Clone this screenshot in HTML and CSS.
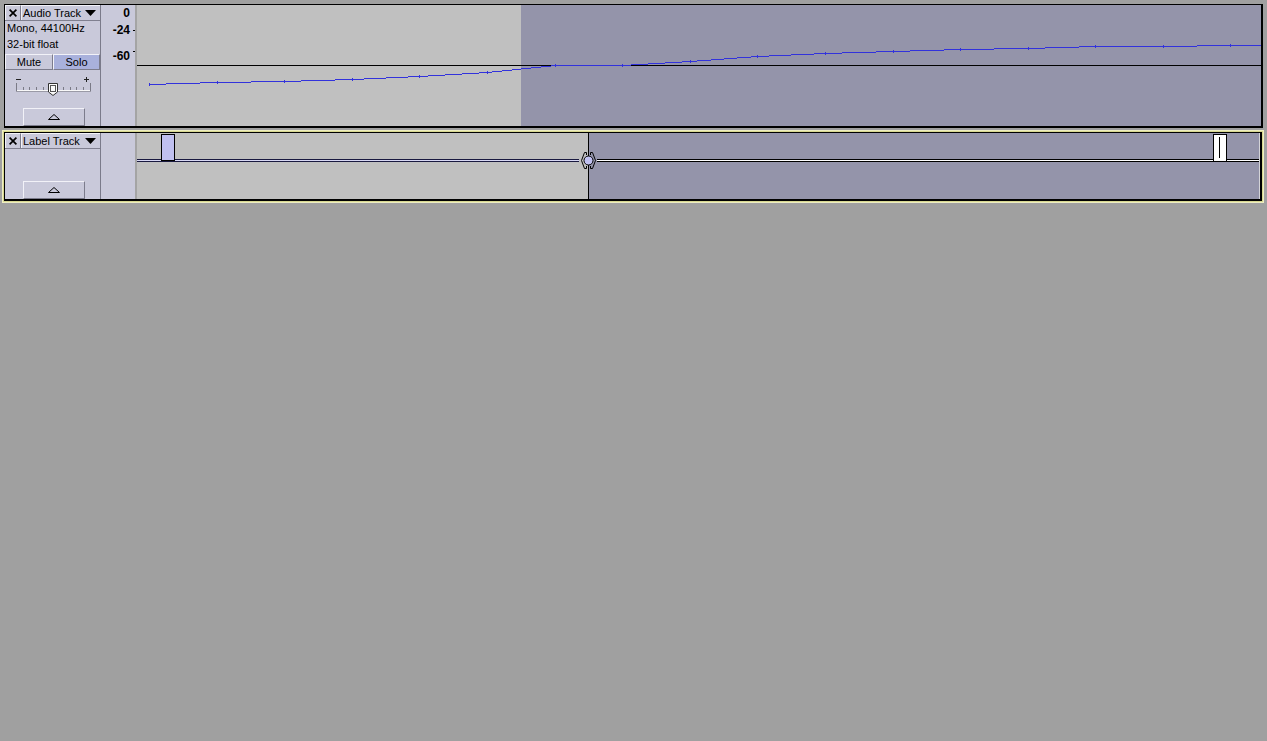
FILE: index.html
```html
<!DOCTYPE html>
<html>
<head>
<meta charset="utf-8">
<link rel="stylesheet" href="styles.css">
</head>
<body>
<div class="tracks">
  <div class="track audio">
    <div class="panel">
      <div class="titlebar">
        <div class="close"><svg width="8" height="8" viewBox="0 0 8 8"><path d="M0.6,0.6 L7.4,7.4 M7.4,0.6 L0.6,7.4" stroke="#000" stroke-width="1.7" fill="none"/></svg></div>
        <div class="name"><span>Audio Track</span><svg class="drop" width="11" height="6" viewBox="0 0 11 6"><polygon points="0,0 11,0 5.5,6" fill="#000"/></svg></div>
      </div>
      <div class="info">Mono, 44100Hz</div>
      <div class="info">32-bit float</div>
      <div class="ms">
        <div class="btn mute">Mute</div>
        <div class="btn solo">Solo</div>
      </div>
      <svg class="gain" width="95" height="36" viewBox="0 0 95 36" shape-rendering="crispEdges">
        <path d="M11,9.5 H16" stroke="#222" fill="none"/>
        <path d="M79,9.5 H84 M81.5,7 V12" stroke="#222" fill="none"/>
        <path d="M11,20.5 H86" stroke="#f8f8f8" fill="none"/>
        <path d="M11,21.5 H86" stroke="#9a9aa6" fill="none"/>
        <path d="M11.5,13 V21 M85.5,13 V21 M18.5,17 V20 M24.5,17 V20 M31.5,17 V20 M38.5,17 V20 M44.5,17 V20 M51.5,17 V20 M58.5,17 V20 M65.5,17 V20 M71.5,17 V20 M78.5,17 V20" stroke="#7a7a86" fill="none"/>
        <path d="M43.5,13.5 H52.5 V22 L48,25.5 L43.5,22 Z" fill="#fafafa" stroke="#333" shape-rendering="auto"/>
        <rect x="45.5" y="15.5" width="5" height="6" fill="none" stroke="#555"/>
      </svg>
      <div class="collapse"><svg width="12" height="6" viewBox="0 0 12 6"><polygon points="0.5,5.5 11.5,5.5 6,0.5" fill="none" stroke="#000"/></svg></div>
    </div>
    <div class="ruler">
      <div class="rl">0</div>
      <div class="rl r24">-24</div>
      <div class="rl r60">-60</div>
    </div>
    <svg class="wave" width="1124" height="121" viewBox="0 0 1124 121" shape-rendering="crispEdges">
      <rect x="0" y="0" width="384" height="121" fill="#c0c0c0"/>
      <rect x="384" y="0" width="740" height="121" fill="#9494aa"/>
      <path d="M0,60.5 H1124" stroke="#000" fill="none"/>
      <path fill="none" stroke="#3232dc" d="M12,79.5 H29 M29,78.5 H63 M63,77.5 H114 M114,76.5 H164 M164,75.5 H198 M198,74.5 H227 M227,73.5 H249 M249,72.5 H271 M271,71.5 H291 M291,70.5 H308 M308,69.5 H325 M325,68.5 H342 M342,67.5 H355 M355,66.5 H365 M365,65.5 H375 M375,64.5 H384 M384,63.5 H394 M394,62.5 H404 M404,61.5 H414 M414,60.5 H494 M494,59.5 H511 M511,58.5 H528 M528,57.5 H545 M545,56.5 H560 M560,55.5 H574 M574,54.5 H587 M587,53.5 H600 M600,52.5 H614 M614,51.5 H632 M632,50.5 H654 M654,49.5 H677 M677,48.5 H705 M705,47.5 H739 M739,46.5 H773 M773,45.5 H807 M807,44.5 H857 M857,43.5 H908 M908,42.5 H942 M942,41.5 H1060 M1060,40.5 H1124"/>
      <path fill="none" stroke="#3232dc" d="M12.5,78V81 M80.5,76V79 M147.5,75V78 M215.5,73V76 M282.5,70V73 M350.5,66V69 M418.5,59V62 M485.5,59V62 M553.5,55V58 M620.5,50V53 M688.5,47V50 M756.5,45V48 M823.5,43V46 M891.5,42V45 M958.5,40V43 M1026.5,40V43 M1093.5,39V42"/>
    </svg>
  </div>

  <div class="focus">
    <div class="track label">
      <div class="panel">
        <div class="titlebar">
          <div class="close"><svg width="8" height="8" viewBox="0 0 8 8"><path d="M0.6,0.6 L7.4,7.4 M7.4,0.6 L0.6,7.4" stroke="#000" stroke-width="1.7" fill="none"/></svg></div>
          <div class="name"><span>Label Track</span><svg class="drop" width="11" height="6" viewBox="0 0 11 6"><polygon points="0,0 11,0 5.5,6" fill="#000"/></svg></div>
        </div>
        <div class="collapse"><svg width="12" height="6" viewBox="0 0 12 6"><polygon points="0.5,5.5 11.5,5.5 6,0.5" fill="none" stroke="#000"/></svg></div>
      </div>
      <div class="ruler"></div>
      <svg class="wave" width="1123" height="66" viewBox="0 0 1123 66" shape-rendering="crispEdges">
        <rect x="0" y="0" width="451" height="66" fill="#c0c0c0"/>
        <rect x="451" y="0" width="672" height="66" fill="#9494aa"/>
        <rect x="1122" y="0" width="1" height="66" fill="#d4d4d8"/>
        <path d="M451.5,0 V66" stroke="#000" fill="none"/>
        <rect x="0" y="26" width="442" height="3" fill="#1a1a40"/>
        <rect x="0" y="27" width="442" height="1" fill="#d8d8f4"/>
        <rect x="460" y="26" width="662" height="3" fill="#000"/>
        <rect x="460" y="27" width="662" height="1" fill="#ffffff"/>
        <rect x="24.5" y="1.5" width="13" height="26" fill="#c0c0f0" stroke="#000"/>
        <rect x="1076.5" y="1.5" width="13" height="27" fill="#ffffff" stroke="#000"/>
        <path d="M1082.5,4 V25" stroke="#000" fill="none"/>
        <g shape-rendering="auto" fill="none" stroke="#000">
          <path d="M449.5,22 V19.5 H447.5 L444.5,27.5 L447.5,35.5 H449.5 V33"/>
          <path d="M453.5,22 V19.5 H455.5 L458.5,27.5 L455.5,35.5 H453.5 V33"/>
          <circle cx="451.5" cy="27.5" r="4.5" fill="#c0c0f0"/>
        </g>
      </svg>
    </div>
  </div>
</div>
</body>
</html>
```
FILE: styles.css
```css
* { box-sizing: border-box; }

body {
  margin: 0;
  background: #a0a0a0;
  font-family: "Liberation Sans", Arial, sans-serif;
  font-size: 11px;
  color: #000;
}

.tracks {
  padding-top: 4px;
}

.track {
  display: flex;
  background: #c9c9da;
  border-style: solid;
  border-color: #000;
  border-width: 1px 2px 2px 1px;
}

.audio {
  margin-left: 4px;
  width: 1259px;
  height: 124px;
}

.focus {
  margin: 2px 0 0 2px;
  width: 1262px;
  border: 1px solid #eeeec2;
  padding: 1px;
  background: #d8d890;
}

.label {
  width: 1258px;
  height: 69px;
}

.panel {
  width: 96px;
  flex: none;
  display: flex;
  flex-direction: column;
  border-right: 1px solid #7a7a8a;
}

.titlebar {
  display: flex;
  height: 16px;
  border-bottom: 1px solid #808090;
}

.close {
  width: 16px;
  flex: none;
  display: flex;
  align-items: center;
  justify-content: center;
  border-top: 1px solid #f2f2f8;
  border-left: 1px solid #f2f2f8;
  border-right: 1px solid #7c7c8c;
}

.close svg { display: block; }

.name {
  flex: 1;
  display: flex;
  align-items: center;
  padding-left: 1px;
  border-top: 1px solid #f2f2f8;
  border-left: 1px solid #f2f2f8;
  line-height: 14px;
  white-space: nowrap;
}

.drop {
  display: block;
  margin-left: auto;
  margin-right: 4px;
}

.info {
  height: 16px;
  line-height: 14px;
  padding-left: 2px;
  white-space: nowrap;
}

.ms {
  display: flex;
  margin-top: 1px;
  height: 16px;
}

.btn {
  border-style: solid;
  border-width: 1px;
  border-color: #f2f2f8 #7c7c8c #7c7c8c #f2f2f8;
  text-align: center;
  line-height: 14px;
}

.mute { width: 48px; }

.solo {
  flex: 1;
  background: #a9b1dc;
}

.gain {
  display: block;
  flex: none;
}

.collapse {
  margin-top: auto;
  margin-left: 18px;
  width: 62px;
  height: 18px;
  flex: none;
  display: flex;
  justify-content: center;
  padding-top: 5px;
  border-style: solid;
  border-width: 1px;
  border-color: #f2f2f8 #7c7c8c #7c7c8c #f2f2f8;
}

.collapse svg { display: block; }

.ruler {
  width: 36px;
  flex: none;
  border-right: 2px solid #a4a4a4;
  display: flex;
  flex-direction: column;
  align-items: flex-end;
  padding: 2px 5px 0 0;
  font-weight: bold;
  font-size: 12px;
  line-height: 12px;
}

.rl {
  position: relative;
}

.r24 { margin-top: 5px; }
.r60 { margin-top: 14px; }

.r24::after,
.r60::after {
  content: "";
  position: absolute;
  left: calc(100% + 3px);
  width: 2px;
  height: 1px;
  background: #000;
}

.r24::after { top: 6px; }
.r60::after { top: 1px; }

.wave {
  display: block;
  flex: none;
}
```
